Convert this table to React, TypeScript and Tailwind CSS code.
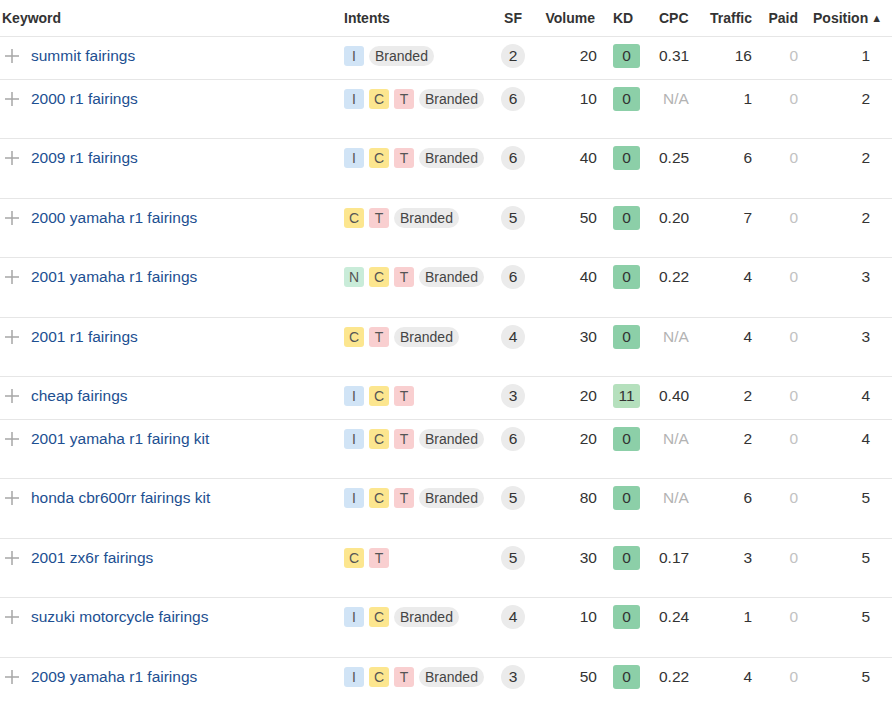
import React from "react";

type Row = {
  kw: string;
  intents: string[];
  branded: boolean;
  sf: number;
  vol: number;
  kd: number;
  cpc: string;
  traffic: number;
  pos: number;
  h: string;
};

const rows: Row[] = [
  { kw: "summit fairings", intents: ["I"], branded: true, sf: 2, vol: 20, kd: 0, cpc: "0.31", traffic: 16, pos: 1, h: "h-[43px]" },
  { kw: "2000 r1 fairings", intents: ["I", "C", "T"], branded: true, sf: 6, vol: 10, kd: 0, cpc: "N/A", traffic: 1, pos: 2, h: "h-[59px]" },
  { kw: "2009 r1 fairings", intents: ["I", "C", "T"], branded: true, sf: 6, vol: 40, kd: 0, cpc: "0.25", traffic: 6, pos: 2, h: "h-[60px]" },
  { kw: "2000 yamaha r1 fairings", intents: ["C", "T"], branded: true, sf: 5, vol: 50, kd: 0, cpc: "0.20", traffic: 7, pos: 2, h: "h-[59px]" },
  { kw: "2001 yamaha r1 fairings", intents: ["N", "C", "T"], branded: true, sf: 6, vol: 40, kd: 0, cpc: "0.22", traffic: 4, pos: 3, h: "h-[60px]" },
  { kw: "2001 r1 fairings", intents: ["C", "T"], branded: true, sf: 4, vol: 30, kd: 0, cpc: "N/A", traffic: 4, pos: 3, h: "h-[59px]" },
  { kw: "cheap fairings", intents: ["I", "C", "T"], branded: false, sf: 3, vol: 20, kd: 11, cpc: "0.40", traffic: 2, pos: 4, h: "h-[43px]" },
  { kw: "2001 yamaha r1 fairing kit", intents: ["I", "C", "T"], branded: true, sf: 6, vol: 20, kd: 0, cpc: "N/A", traffic: 2, pos: 4, h: "h-[59px]" },
  { kw: "honda cbr600rr fairings kit", intents: ["I", "C", "T"], branded: true, sf: 5, vol: 80, kd: 0, cpc: "N/A", traffic: 6, pos: 5, h: "h-[60px]" },
  { kw: "2001 zx6r fairings", intents: ["C", "T"], branded: false, sf: 5, vol: 30, kd: 0, cpc: "0.17", traffic: 3, pos: 5, h: "h-[59px]" },
  { kw: "suzuki motorcycle fairings", intents: ["I", "C"], branded: true, sf: 4, vol: 10, kd: 0, cpc: "0.24", traffic: 1, pos: 5, h: "h-[60px]" },
  { kw: "2009 yamaha r1 fairings", intents: ["I", "C", "T"], branded: true, sf: 3, vol: 50, kd: 0, cpc: "0.22", traffic: 4, pos: 5, h: "h-[60px]" },
];

const intentClass: Record<string, string> = {
  I: "bg-[#d1e4f6]",
  C: "bg-[#fce68f]",
  T: "bg-[#f9cfd0]",
  N: "bg-[#c9ecd9]",
};

const grid =
  "grid grid-cols-[344px_154px_30px_69px_16px_46px_41px_52px_46px_94px]";

function Plus() {
  return (
    <svg width="14" height="14" viewBox="0 0 14 14" className="shrink-0">
      <rect x="6.25" y="0" width="1.5" height="14" fill="#a6a6a6" />
      <rect x="0" y="6.25" width="14" height="1.5" fill="#a6a6a6" />
    </svg>
  );
}

export default function App() {
  return (
    <div
      className="w-[892px] h-[706px] overflow-hidden bg-white text-[#333]"
      style={{ fontFamily: '"Liberation Sans", Arial, sans-serif' }}
    >
      <div className={`${grid} h-[37px] border-b border-[#e6e6e6] items-center text-[14px] font-bold text-[#333]`}>
        <div className="pl-[2px]">Keyword</div>
        <div>Intents</div>
        <div className="text-center">SF</div>
        <div className="text-right pr-[2px]">Volume</div>
        <div />
        <div>KD</div>
        <div>CPC</div>
        <div className="text-right">Traffic</div>
        <div className="text-right">Paid</div>
        <div className="pl-[15px] flex items-center">
          Position
          <span className="ml-[3px] text-[11px] leading-none">▲</span>
        </div>
      </div>
      {rows.map((r, i) => (
        <div
          key={i}
          className={`${grid} ${r.h} border-b border-[#e6e6e6] items-start pt-[8px] text-[15.5px]`}
        >
          <div className="flex items-center h-[22px] pl-[5px] gap-[12px]">
            <Plus />
            <span className="text-[#1d4f91] whitespace-nowrap">{r.kw}</span>
          </div>
          <div className="flex items-center h-[22px] gap-[5px] text-[14px] text-[#555]">
            {r.intents.map((x) => (
              <span
                key={x}
                className={`${intentClass[x]} w-[20px] h-[20px] rounded-[3px] flex items-center justify-center`}
              >
                {x}
              </span>
            ))}
            {r.branded && (
              <span className="bg-[#ebebeb] h-[20px] px-[6px] rounded-full flex items-center text-[#444]">
                Branded
              </span>
            )}
          </div>
          <div className="flex justify-center h-[22px] items-center">
            <span className="w-[24px] h-[24px] rounded-full bg-[#ebebeb] flex items-center justify-center">
              {r.sf}
            </span>
          </div>
          <div className="text-right h-[22px] flex items-center justify-end">{r.vol}</div>
          <div />
          <div className="h-[22px] flex items-center">
            <span
              className={`${r.kd === 0 ? "bg-[#8ccfa8]" : "bg-[#b5e0bd]"} w-[27px] h-[24px] rounded-[3px] flex items-center justify-center`}
            >
              {r.kd}
            </span>
          </div>
          <div className={`h-[22px] flex items-center ${r.cpc === "N/A" ? "text-[#b3b3b3] pl-[4px]" : ""}`}>
            {r.cpc}
          </div>
          <div className="h-[22px] flex items-center justify-end">{r.traffic}</div>
          <div className="h-[22px] flex items-center justify-end text-[#c2c2c2]">0</div>
          <div className="h-[22px] flex items-center justify-end pr-[22px]">{r.pos}</div>
        </div>
      ))}
    </div>
  );
}
